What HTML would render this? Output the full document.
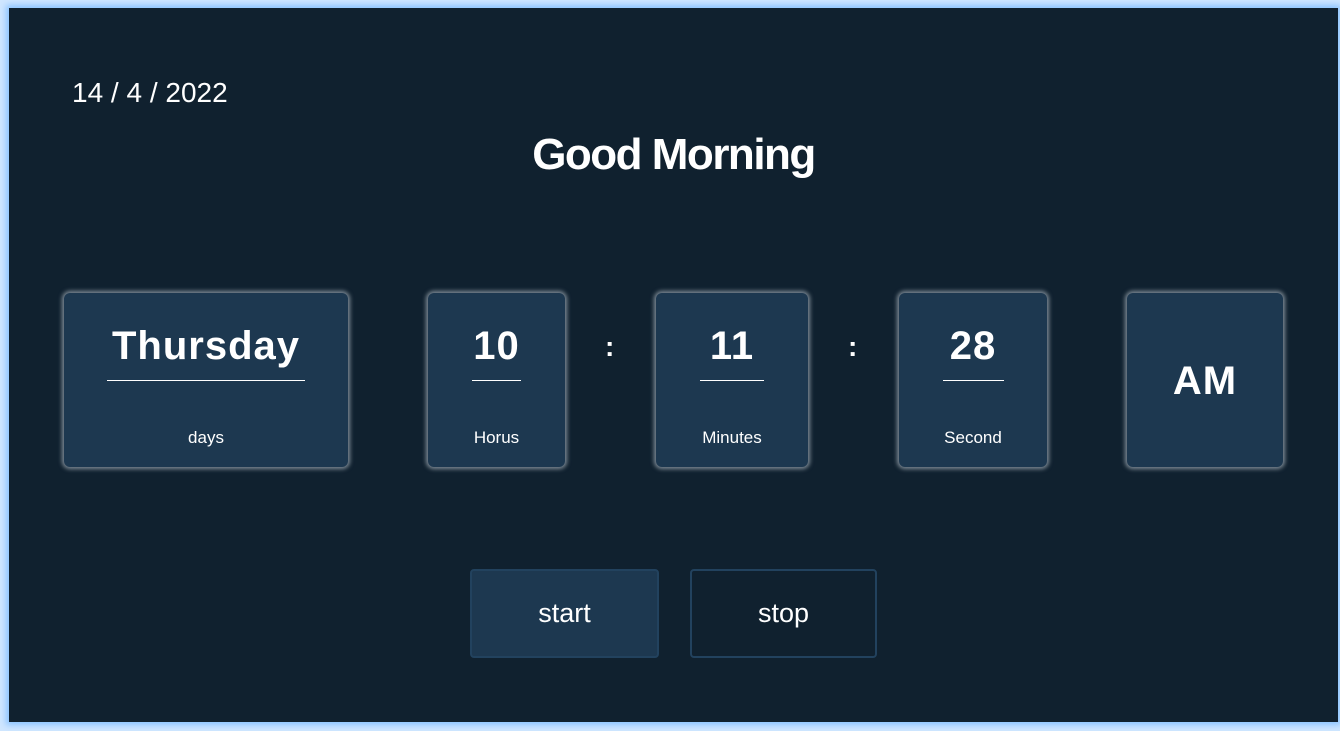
<!DOCTYPE html>
<html><head><style>
html,body{margin:0;padding:0;width:1340px;height:731px;background:#cfe6ff;overflow:hidden;font-family:"Liberation Sans",sans-serif;color:#fff}
.frame{position:absolute;left:9px;top:8px;width:1329px;height:714px;background:#10212f;box-shadow:0 0 6px 3px #8cc4ff}
.abs{position:absolute}
.date{left:63px;top:69px;font-size:28px}
.title{left:0;width:1329px;top:122px;text-align:center;font-size:44px;font-weight:bold;letter-spacing:-1.5px}
.card{position:absolute;top:285px;height:174px;background:#1d3850;border-radius:6px;box-shadow:0 0 4px 2px rgba(200,210,220,.6)}
.card .v{position:absolute;left:0;right:0;top:31px;text-align:center;font-size:40px;font-weight:bold;letter-spacing:1px}
.card .u{position:absolute;top:87px;height:1px;background:#fff}
.card .l{position:absolute;left:0;right:0;top:135px;text-align:center;font-size:17px}
.colon{position:absolute;top:323px;font-size:28px;font-weight:bold}
.btn{position:absolute;top:561px;height:85px;border:2px solid #22425e;border-radius:4px;text-align:center;line-height:85px;font-size:27px}
</style></head><body>
<div class="frame">
<div class="abs date">14 / 4 / 2022</div>
<div class="abs title">Good Morning</div>
<div class="card" style="left:55px;width:284px"><div class="v">Thursday</div><div class="u" style="left:43px;width:198px"></div><div class="l">days</div></div>
<div class="card" style="left:419px;width:137px"><div class="v">10</div><div class="u" style="left:44px;width:49px"></div><div class="l">Horus</div></div>
<div class="colon" style="left:596px">:</div>
<div class="card" style="left:647px;width:152px"><div class="v">11</div><div class="u" style="left:44px;width:64px"></div><div class="l">Minutes</div></div>
<div class="colon" style="left:839px">:</div>
<div class="card" style="left:890px;width:148px"><div class="v">28</div><div class="u" style="left:44px;width:61px"></div><div class="l">Second</div></div>
<div class="card" style="left:1118px;width:156px"><div class="v" style="top:66px">AM</div></div>
<div class="btn" style="left:461px;width:185px;background:#1d3850">start</div>
<div class="btn" style="left:681px;width:183px">stop</div>
</div>
</body></html>
